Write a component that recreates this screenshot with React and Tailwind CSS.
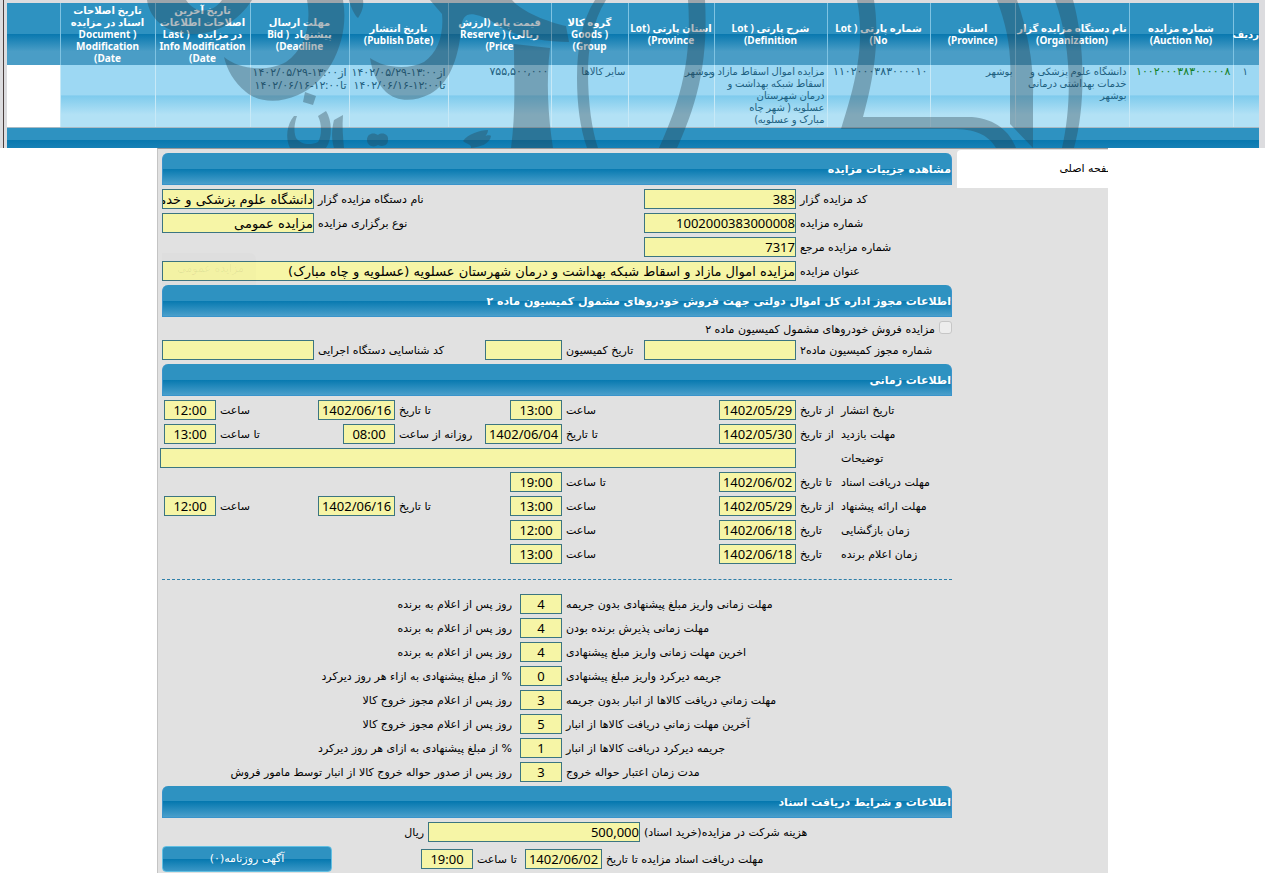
import { useId } from "react";
import clsx from "clsx";

const columns = [
  { width: "w-[26px]", lines: ["ردیف"] },
  { width: "w-[104px]", lines: ["شماره مزایده", "(Auction No)"] },
  { width: "w-[114px]", lines: ["نام دستگاه مزایده گزار", "(Organization)"] },
  { width: "w-[85px]", lines: ["استان", "(Province)"] },
  { width: "w-[103px]", lines: ["شماره پارتی ( Lot", "No)"] },
  { width: "w-[113px]", lines: ["شرح پارتی ( Lot", "Definition)"] },
  { width: "w-[86px]", lines: ["استان پارتی (Lot", "Province)"] },
  { width: "w-[77px]", lines: ["گروه کالا", "( Goods", "Group)"] },
  { width: "w-[103px]", lines: ["قیمت پایه (ارزش", "ریالی) ( Reserve", "Price)"] },
  { width: "w-[99px]", lines: ["تاریخ انتشار", "(Publish Date)"] },
  { width: "w-[99px]", lines: ["مهلت ارسال", "پیشنهاد  ( Bid", "Deadline)"] },
  {
    width: "w-[95px]",
    lines: ["تاریخ آخرین", "اصلاحات اطلاعات", "در مزایده   ( Last", "Info Modification", "Date)"],
  },
  {
    width: "w-[95px]",
    lines: ["تاریخ اصلاحات", "اسناد در مزایده", "( Document", "Modification", "Date)"],
  },
  { width: "w-[53px]", lines: [] },
];

const cells = [
  { className: "text-center", lines: ["۱"] },
  { className: "text-[11px] text-[#14802a]", lines: ["۱۰۰۲۰۰۰۳۸۳۰۰۰۰۰۸"] },
  { lines: ["دانشگاه علوم پزشکی و", "خدمات بهداشتی درمانی", "بوشهر"] },
  { lines: ["بوشهر"] },
  { className: "text-[11px]", lines: ["۱۱۰۲۰۰۰۳۸۳۰۰۰۰۱۰"] },
  {
    lines: ["مزایده اموال اسقاط مازاد و", "اسقاط شبکه بهداشت و", "درمان شهرستان", "عسلویه ( شهر چاه", "مبارک و عسلویه)"],
  },
  { lines: ["بوشهر"] },
  { lines: ["سایر کالاها"] },
  { className: "text-[11px]", lines: ["۷۵۵,۵۰۰,۰۰۰"] },
  { className: "text-[11px] leading-[13px]", lines: ["از۱۳:۰۰-۱۴۰۲/۰۵/۲۹", "تا۱۲:۰۰-۱۴۰۲/۰۶/۱۶"] },
  { className: "text-[11px] leading-[13px]", lines: ["از۱۳:۰۰-۱۴۰۲/۰۵/۲۹", "تا۱۲:۰۰-۱۴۰۲/۰۶/۱۶"] },
  { lines: [] },
  { lines: [] },
  { className: "bg-white", lines: [] },
];

const schedule = [
  {
    title: "تاریخ انتشار",
    fields: [
      ["از تاریخ", "1402/05/29"],
      ["ساعت", "13:00"],
      ["تا تاریخ", "1402/06/16"],
      ["ساعت", "12:00"],
    ],
  },
  {
    title: "مهلت بازدید",
    fields: [
      ["از تاریخ", "1402/05/30"],
      ["تا تاریخ", "1402/06/04"],
      ["روزانه از ساعت", "08:00"],
      ["تا ساعت", "13:00"],
    ],
  },
  { title: "توضیحات", note: true },
  {
    title: "مهلت دریافت اسناد",
    fields: [
      ["تا تاریخ", "1402/06/02"],
      ["تا ساعت", "19:00"],
    ],
  },
  {
    title: "مهلت ارائه پیشنهاد",
    fields: [
      ["از تاریخ", "1402/05/29"],
      ["ساعت", "13:00"],
      ["تا تاریخ", "1402/06/16"],
      ["ساعت", "12:00"],
    ],
  },
  {
    title: "زمان بازگشایی",
    fields: [
      ["تاریخ", "1402/06/18"],
      ["ساعت", "12:00"],
    ],
  },
  {
    title: "زمان اعلام برنده",
    fields: [
      ["تاریخ", "1402/06/18"],
      ["ساعت", "13:00"],
    ],
  },
];

const deadlines = [
  ["مهلت زمانی واریز مبلغ پیشنهادی بدون جریمه", "4", "روز پس از اعلام به برنده"],
  ["مهلت زمانی پذیرش برنده بودن", "4", "روز پس از اعلام به برنده"],
  ["اخرین مهلت زمانی واریز مبلغ پیشنهادی", "4", "روز پس از اعلام به برنده"],
  ["جریمه دیرکرد واریز مبلغ پیشنهادی", "0", "% از مبلغ پیشنهادی به ازاء هر روز دیرکرد"],
  ["مهلت زماني دریافت کالاها از انبار بدون جریمه", "3", "روز پس از اعلام مجوز خروج کالا"],
  ["آخرین مهلت زماني دریافت کالاها از انبار", "5", "روز پس از اعلام مجوز خروج کالا"],
  ["جریمه دیرکرد دریافت کالاها از انبار", "1", "% از مبلغ پیشنهادی به ازای هر روز دیرکرد"],
  ["مدت زمان اعتبار حواله خروج", "3", "روز پس از صدور حواله خروج کالا از انبار توسط مامور فروش"],
];

const labelText = "text-left text-[11px] leading-[18px] whitespace-nowrap";

function Lines({ lines }) {
  return lines.map((line, i) => (
    <span key={i} className="block whitespace-pre">
      {line}
    </span>
  ));
}

function Watermark() {
  return (
    <svg
      className="pointer-events-none absolute inset-0 h-full w-full fill-[#27404d] opacity-35"
      viewBox="0 0 1265 148"
      preserveAspectRatio="none"
      aria-hidden="true"
    >
      <path d="M147 0C150 20 166 32 188 34C214 36 238 22 252 0H222C214 12 196 16 186 0Z" />
      <path d="M224 57C240 70 268 72 286 62C304 50 312 26 307 0H343C350 38 330 82 298 95C278 104 258 102 246 92C234 82 227 70 224 57Z" />
      <path d="M349 0C351 8 355 16 358 18C362 12 364 6 363 0Z" />
      <path d="M370 58C384 68 408 70 424 62C438 52 444 34 442 14L430 0H512C522 12 548 22 566 26L569 42C540 42 510 36 490 20C472 12 462 10 461 30C458 62 448 84 430 94C412 103 396 101 386 92C376 82 372 70 370 58Z" />
      <path d="M514 44L550 48C546 80 548 116 553 148H511C516 112 514 78 514 44Z" />
      <path d="M595 0H606C592 22 588 50 588 72C588 104 592 130 598 148H587C580 128 577 104 577 78C577 48 582 20 595 0Z" />
      <path d="M294 116C287 124 285 138 290 148H326C333 138 332 120 326 111L318 116C322 124 322 136 318 142C310 146 300 144 296 138C293 130 295 122 297 116Z" />
      <path d="M305 92L316 96L313 105L303 102Z" />
      <path d="M334 120L343 115C342 126 343 138 344 148H334C331 138 332 128 334 120Z" />
      <path d="M367 140C367 133 374 132 378 135C382 132 389 134 388 140C388 146 382 147 378 145C374 148 367 146 367 140Z" />
      <path d="M463 141C468 134 480 130 488 130C488 136 482 139 472 142C480 137 490 134 491 136C490 144 480 147 471 148C472 144 466 144 463 141Z" />
      <path d="M688 0H705C708 56 700 98 677 148H659C682 98 692 56 688 0Z" />
      <path d="M857 0H874C880 38 874 78 863 117H972C996 119 1010 132 1016 148H996C988 134 974 129 952 129H841C854 88 866 46 857 0Z" />
      <path d="M997 0H1017C1028 32 1034 66 1033 96V148L1010 124V80C1012 50 1006 24 997 0Z" />
      <path d="M1055 0H1073C1085 42 1086 106 1074 148H1062C1072 104 1072 46 1055 0Z" />
    </svg>
  );
}

function AuctionTable() {
  return (
    <div className="relative overflow-hidden bg-[#dcdcdf] pt-[3px] pr-[6px] pl-[7px] font-['Noto_Sans','DejaVu_Sans',sans-serif]">
      <span className="absolute inset-y-0 left-[3px] w-px bg-[#4a3f3f]" />
      <table className="w-full table-fixed border-collapse text-[10px] leading-3">
        <thead>
          <tr className="h-[62px] bg-[linear-gradient(#2e92c1_0_50%,#0878af_50%,#4a9dc6_78%,#4a9dc6)] text-white">
            {columns.map((col, i) => (
              <th
                key={i}
                className={clsx(
                  col.width,
                  "p-0 text-center align-middle font-bold whitespace-nowrap",
                  i > 0 && "border-r border-[#7fc3e2]"
                )}
              >
                <Lines lines={col.lines} />
              </th>
            ))}
          </tr>
        </thead>
        <tbody>
          <tr className="h-[62px] bg-[linear-gradient(#9dd8f3_0_48%,#7fcbed_50%,#b2e1f5_80%,#b2e1f5)] text-[#1d6080]">
            {cells.map((cell, i) => (
              <td
                key={i}
                className={clsx(
                  "p-0 pr-[2px] align-top whitespace-nowrap",
                  i > 0 && "border-r border-[#c7e9f7]",
                  cell.className
                )}
              >
                <Lines lines={cell.lines} />
              </td>
            ))}
          </tr>
        </tbody>
      </table>
      <div className="h-[21px] border-t border-[#a9bac4] bg-[linear-gradient(#2e92c1_0_58%,#0878af_58%,#1681b6)]" />
      <Watermark />
    </div>
  );
}

function SectionTitle({ children }) {
  return (
    <h2 className="flex h-8 items-center rounded-t-md border border-t-0 border-[#3a94cb] bg-[linear-gradient(#2e92c1_0_50%,#0578af_50%,#4a9fcb)] pt-1 text-[11px] font-bold text-white">
      {children}
    </h2>
  );
}

function Input({ className, value, ...props }) {
  // Latin digits are narrower than the Persian face
  const latin = /^[\d:/,]*$/.test(value);
  return (
    <input
      type="text"
      readOnly
      value={value}
      className={clsx(
        "h-5 min-w-0 border border-[#3b7581] bg-[#f6f5a6] text-[13px] leading-[18px] text-black outline-none",
        latin && "font-['Noto_Sans',sans-serif]",
        className
      )}
      {...props}
    />
  );
}

function Field({ label, labelClass, inputClass, value = "" }) {
  const id = useId();
  return (
    <>
      <label htmlFor={id} className={clsx(labelText, "pt-[2px] pl-1", labelClass)}>
        {label}
      </label>
      <Input id={id} className={inputClass} value={value} />
    </>
  );
}

function ScheduleRow({ row }) {
  return (
    <div className="grid grid-cols-[111px_45px_77px_157px_77px_90px_77px_102px_1fr]">
      {row.note ? (
        <>
          <label htmlFor="note" className={clsx(labelText, "pt-[2px]")}>
            {row.title}
          </label>
          <Input id="note" className="col-start-3 col-end-10 -ml-[2px]" value="" />
        </>
      ) : (
        <>
          <span className={clsx(labelText, "pt-[2px]")}>{row.title}</span>
          {row.fields.map(([label, value], i) => (
            <Field
              key={i}
              label={label}
              value={value}
              inputClass={clsx("text-center", value.length > 5 ? "w-[77px]" : "w-[52px]")}
            />
          ))}
        </>
      )}
    </div>
  );
}

function DeadlineRow({ label, value, unit }) {
  return (
    <div className="flex">
      <Field label={label} value={value} labelClass="w-[390px]" inputClass="w-[42px] text-center" />
      <span className={clsx(labelText, "pt-[2px] pr-2")}>{unit}</span>
    </div>
  );
}

function AuctionDetails() {
  return (
    <main className="min-w-0 flex-1">
      <SectionTitle>مشاهده جزییات مزایده</SectionTitle>
      <div className="relative grid grid-cols-[156px_152px_330px_1fr] gap-y-1 py-1">
        <Field label="کد مزایده گزار" value="383" />
        <Field label="نام دستگاه مزایده گزار" value="دانشگاه علوم پزشکی و خدمات بهداشتی درمانی بوشهر" />
        <Field label="شماره مزایده" value="1002000383000008" />
        <Field label="نوع برگزاری مزایده" value="مزایده عمومی" />
        <Field label="شماره مزایده مرجع" value="7317" />
        <Field
          label="عنوان مزایده"
          labelClass="col-start-1"
          inputClass="col-span-3"
          value="مزایده اموال مازاد و اسقاط شبکه بهداشت و درمان شهرستان عسلویه (عسلویه و چاه مبارک)"
        />
        <span className="absolute bottom-0 left-0 w-[94px] rounded-tr-md bg-black/1 py-2 pr-3 text-[11px] text-black/6">
          مزایده عمومی
        </span>
      </div>

      <SectionTitle>اطلاعات مجوز اداره کل اموال دولتی جهت فروش خودروهای مشمول کمیسیون ماده ۲</SectionTitle>
      <div className="flex h-[23px] items-start gap-1 pt-1">
        <input
          id="article2"
          type="checkbox"
          className="size-[13px] appearance-none rounded-[3px] border border-[#c6c6c6] bg-[#ededed]"
        />
        <label htmlFor="article2" className={labelText}>
          مزایده فروش خودروهای مشمول کمیسیون ماده ۲
        </label>
      </div>
      <div className="mb-1 grid grid-cols-[156px_152px_82px_77px_171px_1fr]">
        <Field label="شماره مجوز کمیسیون ماده۲" />
        <Field label="تاریخ کمیسیون" />
        <Field label="کد شناسایی دستگاه اجرایی" />
      </div>

      <SectionTitle>اطلاعات زمانی</SectionTitle>
      <div className="flex flex-col gap-1 pt-1 pb-[15px]">
        {schedule.map((row) => (
          <ScheduleRow key={row.title} row={row} />
        ))}
      </div>
      <div className="flex flex-col gap-1 border-t border-dashed border-[#2f7fa8] pt-[14px] pb-1">
        {deadlines.map(([label, value, unit]) => (
          <DeadlineRow key={label} label={label} value={value} unit={unit} />
        ))}
      </div>

      <SectionTitle>اطلاعات و شرایط دریافت اسناد</SectionTitle>
      <div className="flex pt-1">
        <Field
          label="هزینه شرکت در مزایده(خرید اسناد)"
          value="500,000"
          labelClass="w-[312px]"
          inputClass="w-[212px]"
        />
        <span className={clsx(labelText, "pt-[2px] pr-1")}>ریال</span>
      </div>
      <div className="flex items-center pt-1">
        <Field
          label="مهلت دریافت اسناد مزایده تا تاریخ"
          value="1402/06/02"
          labelClass="w-[350px]"
          inputClass="w-[77px] text-center"
        />
        <Field label="تا ساعت" value="19:00" labelClass="w-[52px]" inputClass="w-[52px] text-center" />
        <button
          type="button"
          className="mr-auto h-[26px] w-[170px] rounded border border-[#62bfe2] bg-[linear-gradient(#2e92c1_0_50%,#0578af_50%,#3a97c6)] text-[11px] text-white"
        >
          آگهی روزنامه(۰)
        </button>
      </div>
    </main>
  );
}

export default function App() {
  return (
    <div dir="rtl" className="flex min-h-screen flex-col bg-white font-['DejaVu_Sans',sans-serif] text-black">
      <AuctionTable />
      <div className="mx-auto flex w-full max-w-[951px] grow gap-1 border-t border-l border-t-[#9a9a9a] border-l-[#c4c4c4] bg-[#e1e1e1] pl-1">
        <aside className="w-[152px] shrink-0 overflow-hidden pt-px">
          <a href="#home" className="ml-px block h-[38px] rounded-tl bg-white text-[11px] leading-[38px]">
            <span className="-mr-2">صفحه اصلی</span>
          </a>
        </aside>
        <div className="flex min-w-0 flex-1 pt-1">
          <AuctionDetails />
        </div>
      </div>
    </div>
  );
}
